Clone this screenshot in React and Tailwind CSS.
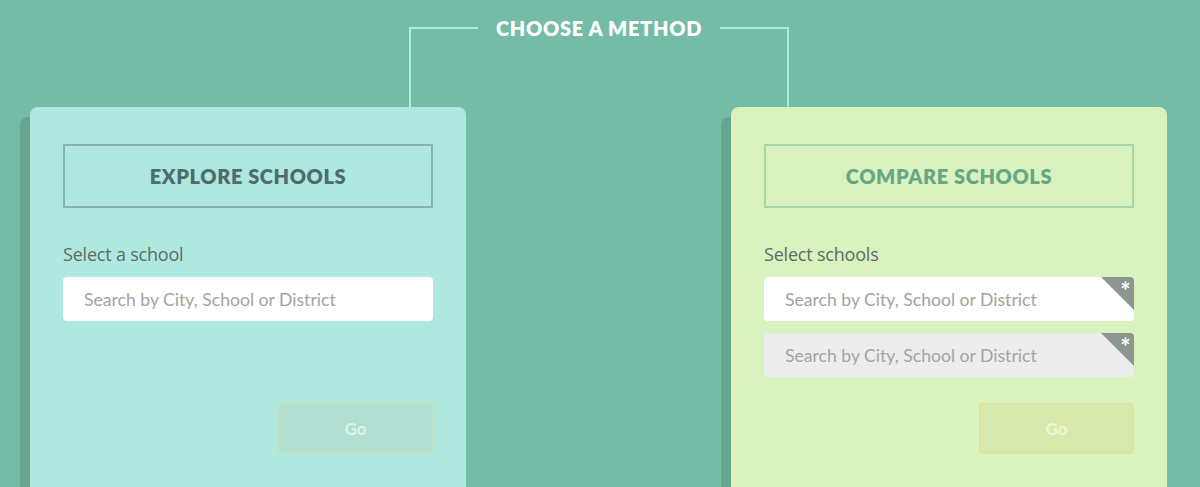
import { useState } from 'react'

const THEMES = {
  explore: {
    card: 'bg-[#aee8df]',
    box: 'border-[#83b2ad] text-[#4e6c6c]',
    go: 'bg-[#b1dfd1] border-[#c4dfbb] text-[#dff3ee]',
  },
  compare: {
    card: 'bg-[#daf2bd]',
    box: 'border-[#a9d6a6] text-[#66a786]',
    go: 'bg-[#d8e9ae] border-[#e0e39e] text-[#eef6d6]',
  },
}

function Corner() {
  return (
    <span className="absolute top-0 right-0 w-[33px] h-[33px] bg-[#8a968e] rounded-tr-[4px] [clip-path:polygon(0_0,100%_0,100%_100%)]">
      <svg className="absolute top-[4px] right-[4px]" width="9" height="9" viewBox="0 0 10 10">
        <g stroke="#fff" strokeWidth="1.8" strokeLinecap="round">
          <line x1="5" y1="1" x2="5" y2="9" />
          <line x1="1.5" y1="3" x2="8.5" y2="7" />
          <line x1="1.5" y1="7" x2="8.5" y2="3" />
        </g>
      </svg>
    </span>
  )
}

function SearchInput({ muted, required }) {
  const [value, setValue] = useState('')
  return (
    <div className="relative">
      <input
        value={value}
        onChange={e => setValue(e.target.value)}
        placeholder="Search by City, School or District"
        className={`w-full h-[44px] rounded-[4px] pl-[21px] pr-10 font-['Lato',sans-serif] text-[17.6px] text-[#555] placeholder:text-[#a3a3a3] outline-none ${muted ? 'bg-[#ededed]' : 'bg-white'}`}
      />
      {required && <Corner />}
    </div>
  )
}

function MethodCard({ theme, title, label, inputs }) {
  const t = THEMES[theme]
  return (
    <div className={`w-[436px] h-[420px] rounded-[8px] shadow-[-10px_10px_0_#66a58f] px-[33px] pt-[37px] flex flex-col ${t.card}`}>
      <div className={`h-[64px] border-2 flex items-center justify-center font-['Lato',sans-serif] font-extrabold text-[20px] tracking-[0.6px] ${t.box}`}>
        {title}
      </div>
      <div className="h-[195px] pt-[34px]">
        <p className="font-['Open_Sans',sans-serif] text-[18px] leading-6 text-[#5c6b66] tracking-[-0.2px]">{label}</p>
        <div className="mt-[11px] flex flex-col gap-3">
          {inputs.map((inp, i) => <SearchInput key={i} {...inp} />)}
        </div>
      </div>
      <button className={`self-end w-[155px] h-[51px] border-2 rounded-[3px] font-['Lato',sans-serif] font-bold text-[17px] ${t.go}`}>
        Go
      </button>
    </div>
  )
}

export default function App() {
  return (
    <div className="w-[1200px] h-[487px] overflow-hidden bg-[#74bca5] font-['Lato',sans-serif]">
      <div className="h-[107px] pl-[409px] flex">
        <div className="w-[380px] flex items-start">
          <div className="flex-1 self-stretch mt-[27px] border-t-2 border-l-2 border-[#b2e9e1]" />
          <h2 className="mx-[18px] mt-[16px] leading-6 text-white font-extrabold text-[20px] tracking-[0.7px]">CHOOSE A METHOD</h2>
          <div className="flex-1 self-stretch mt-[27px] border-t-2 border-r-2 border-[#b2e9e1]" />
        </div>
      </div>
      <div className="flex justify-between pl-[30px] pr-[33px]">
        <MethodCard
          theme="explore"
          title="EXPLORE SCHOOLS"
          label="Select a school"
          inputs={[{}]}
        />
        <MethodCard
          theme="compare"
          title="COMPARE SCHOOLS"
          label="Select schools"
          inputs={[{ required: true }, { required: true, muted: true }]}
        />
      </div>
    </div>
  )
}
